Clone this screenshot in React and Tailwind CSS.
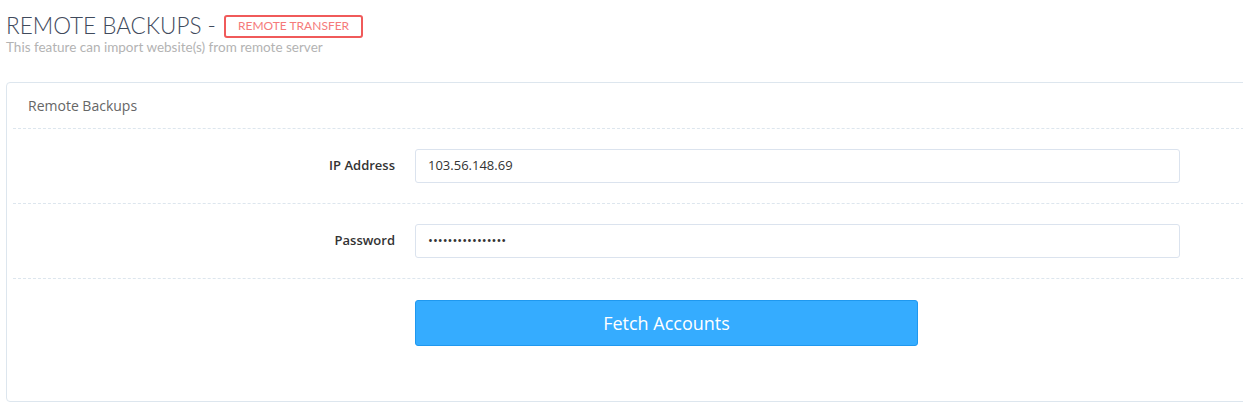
export default function App() {
  return (
    <div className="min-h-[404px] bg-white pl-[6px] pt-[12px] font-['Open_Sans',sans-serif] overflow-hidden">
      <div className="flex items-center gap-[8px]">
        <h1 className="font-['Lato',sans-serif] font-light text-[22.5px] leading-[28px] text-[#3f4a5c]">
          REMOTE BACKUPS -
        </h1>
        <span className="border-2 border-[#f05a5a] rounded-[3px] px-[12px] h-[23px] flex items-center text-[12px] text-[#f57a7a] font-['Lato',sans-serif]">
          REMOTE TRANSFER
        </span>
      </div>
      <p className="font-['Lato',sans-serif] text-[13.5px] text-[#b3b3b3] leading-[15px]">
        This feature can import website(s) from remote server
      </p>

      <div className="mt-[27px] w-[1260px] h-[320px] border border-[#dde6ee] rounded-[4px] px-[6px]">
        <div className="h-[46px] flex items-center pl-[15px] border-b border-dashed border-[#dde6ee] text-[14px] text-[#666]">
          Remote Backups
        </div>
        <FormRow label="IP Address">
          <div className="w-[765px] h-[34px] border border-[#dbe3ee] rounded-[3px] flex items-center px-[12px] text-[13px] text-[#333]">
            103.56.148.69
          </div>
        </FormRow>
        <FormRow label="Password">
          <div className="w-[765px] h-[34px] border border-[#dbe3ee] rounded-[3px] flex items-center px-[12px] text-[13px] text-[#333]">
            ••••••••••••••••
          </div>
        </FormRow>
        <div className="flex pl-[402px] pt-[21px]">
          <button className="w-[503px] h-[46px] bg-[#35acff] border border-[#1f98ef] rounded-[3px] text-white text-[18px]">
            Fetch Accounts
          </button>
        </div>
      </div>
    </div>
  );
}

function FormRow({ label, children }) {
  return (
    <div className="h-[75px] flex items-center border-b border-dashed border-[#dde6ee]">
      <label className="w-[382px] text-right text-[13px] font-semibold text-[#333]">{label}</label>
      <div className="ml-[20px]">{children}</div>
    </div>
  );
}
